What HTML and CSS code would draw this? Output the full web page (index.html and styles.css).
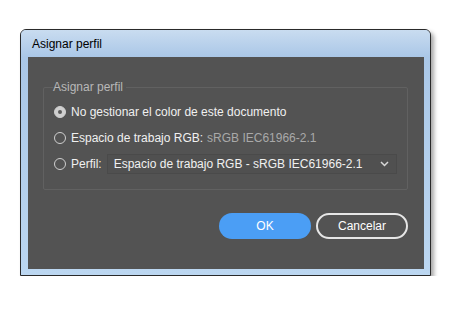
FILE: index.html
```html
<!DOCTYPE html>
<html lang="es">
<head>
<meta charset="utf-8">
<title>Asignar perfil</title>
<link rel="stylesheet" href="styles.css">
</head>
<body>
<div class="page">
  <div class="window">
    <div class="titlebar">Asignar perfil</div>
    <div class="frame">
      <div class="panel">
        <fieldset class="group">
          <legend>Asignar perfil</legend>
          <div class="row first">
            <span class="radio checked"></span>
            <span class="label">No gestionar el color de este documento</span>
          </div>
          <div class="row">
            <span class="radio"></span>
            <span class="label">Espacio de trabajo RGB:</span>
            <span class="value">sRGB IEC61966-2.1</span>
          </div>
          <div class="row">
            <span class="radio"></span>
            <span class="label">Perfil:</span>
            <div class="select">
              <span>Espacio de trabajo RGB - sRGB IEC61966-2.1</span>
              <svg class="chev" width="9" height="6" viewBox="0 0 9 6"><path d="M1 1 L4.5 4.5 L8 1" fill="none" stroke="#d8d8d8" stroke-width="1.5"/></svg>
            </div>
          </div>
        </fieldset>
        <div class="buttons">
          <button class="btn primary">OK</button>
          <button class="btn secondary">Cancelar</button>
        </div>
      </div>
    </div>
  </div>
</div>
</body>
</html>
```

FILE: styles.css
```css
html, body {
  margin: 0;
  padding: 0;
  background: #ffffff;
}
.page {
  padding: 29px 0 0 20px;
  font-family: "Liberation Sans", Arial, sans-serif;
}
.window {
  width: 409px;
  border: 1px solid #2a2a2a;
  border-radius: 6px 6px 0 0;
  background: #b9d4f0;
  box-shadow: 3px 3px 4px rgba(0, 0, 0, 0.35);
  overflow: hidden;
}
.titlebar {
  height: 27px;
  line-height: 28px;
  padding-left: 11px;
  font-size: 12px;
  color: #000;
  background: linear-gradient(#c9dcf0, #aac7e7);
}
.frame {
  padding: 0 6px 6px 7px;
  background: linear-gradient(#aac7e7, #bcd7f1);
}
.panel {
  background: #535353;
  height: 212px;
  padding: 23px 16px 0 15px;
  box-sizing: border-box;
  display: flex;
  flex-direction: column;
}
.group {
  margin: 0;
  border: 1px solid #616161;
  border-radius: 2px;
  padding: 0 10px 12px 10px;
  display: flex;
  flex-direction: column;
}
.group legend {
  padding: 0 3px 0 0;
  margin-left: -1px;
  font-size: 12px;
  line-height: 15px;
  color: #b8b8b8;
}
.row {
  display: flex;
  align-items: center;
  height: 26px;
  font-size: 12px;
  color: #f0f0f0;
}
.row.first {
  margin-top: 4px;
}
.radio {
  width: 10px;
  height: 10px;
  border: 1.5px solid #cfcfcf;
  border-radius: 50%;
  margin-right: 5px;
  flex: none;
}
.radio.checked {
  background: #cfcfcf;
  position: relative;
}
.radio.checked::after {
  content: "";
  position: absolute;
  left: 3px;
  top: 3px;
  width: 4px;
  height: 4px;
  border-radius: 50%;
  background: #5a5a5a;
}
.value {
  margin-left: 4px;
  color: #a9a9a9;
}
.select {
  margin-left: 5px;
  flex: 1;
  height: 20px;
  box-sizing: border-box;
  border: 1px solid #4a4a4a;
  background: #505050;
  display: flex;
  align-items: center;
  padding: 0 6px 0 6px;
  justify-content: space-between;
}
.chev {
  margin-right: 1px;
}
.buttons {
  display: flex;
  justify-content: flex-end;
  gap: 5px;
  margin-top: 23px;
}
.btn {
  width: 92px;
  height: 26px;
  border-radius: 13px;
  font-family: "Liberation Sans", Arial, sans-serif;
  font-size: 12px;
  color: #ffffff;
  padding: 0;
  box-sizing: border-box;
}
.primary {
  background: #4b9ef5;
  border: none;
}
.secondary {
  background: transparent;
  border: 2px solid #e6e6e6;
}
```
